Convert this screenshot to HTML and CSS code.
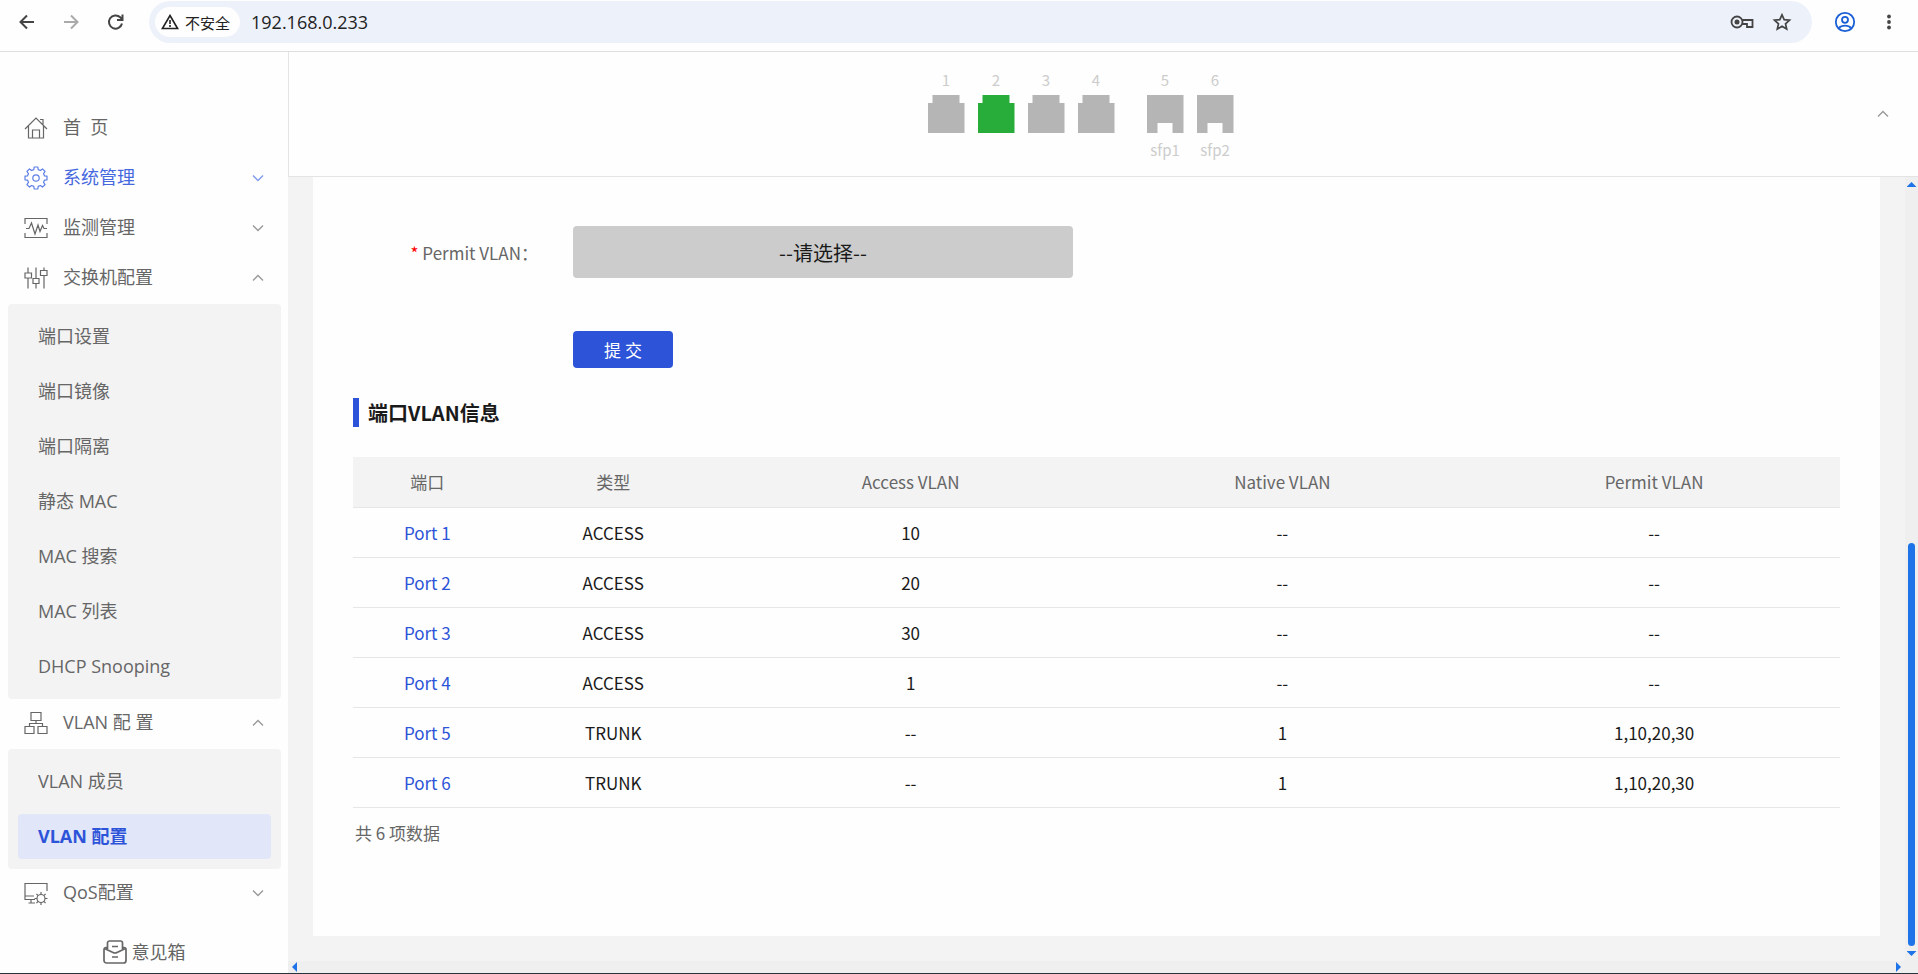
FILE: index.html
```html
<!DOCTYPE html>
<html lang="zh-CN">
<head>
    <meta charset="UTF-8" />
    <meta name="viewport" content="width=device-width, initial-scale=1" />
    <title>VLAN 配置</title>
    <link rel="stylesheet" href="styles.css">
</head>
<body>

<!-- browser bar -->
<div class="browser-bar">
    <button class="nav-btn" aria-label="后退">
        <svg width="20" height="20" viewBox="0 0 20 20"><path d="M17 10H4M10 3.500L3.500 10l6.500 6.500" /></svg>
    </button>
    <button class="nav-btn disabled" aria-label="前进" disabled>
        <svg width="20" height="20" viewBox="0 0 20 20"><path d="M3 10h13M10 3.500l6.500 6.500-6.500 6.500" /></svg>
    </button>
    <button class="nav-btn" aria-label="刷新">
        <svg width="20" height="20" viewBox="0 0 20 20"><path d="M17 11.500a6.600 6.600 0 1 1-1.800-6.200L17.500 7.600M17.500 2.500v5.500h-5.500" /></svg>
    </button>
    <div class="omnibox">
        <button class="security-chip">
            <svg width="18" height="16" viewBox="0 0 18 16"><path d="M9 1.500L16.600 14.500H1.400z" fill="none" stroke="#222" stroke-width="1.600" /><path d="M9 6v4M9 11v2" stroke="#222" stroke-width="1.600" /></svg>
            <span>不安全</span>
        </button>
        <input type="text" class="url-input" value="192.168.0.233" aria-label="地址栏" />
        <button class="omni-btn" aria-label="密码">
            <svg width="24" height="16" viewBox="0 0 24 16"><circle cx="7" cy="8" r="5.500" fill="none" stroke="#444" stroke-width="1.800" /><circle cx="7" cy="8" r="2.500" fill="#444" /><path d="M12 6h10.500v7h-5.500v-3h-5" fill="none" stroke="#444" stroke-width="1.800" /></svg>
        </button>
        <button class="omni-btn" aria-label="收藏">
            <svg width="20" height="20" viewBox="0 0 20 20"><path d="M10 2.800l2.200 4.900 5.300.500-4 3.600 1.200 5.300-4.700-2.800-4.700 2.800 1.200-5.300-4-3.600 5.300-.500z" fill="none" stroke="#444" stroke-width="1.700" /></svg>
        </button>
    </div>
    <button class="bar-btn profile" aria-label="用户">
        <svg width="22" height="22" viewBox="0 0 22 22" fill="none" stroke="#1a5fd6" stroke-width="1.800"><circle cx="11" cy="11" r="9.200" /><circle cx="11" cy="8.800" r="3" /><path d="M4.800 17.200c2.800-3.400 9.600-3.400 12.400 0" /></svg>
    </button>
    <button class="bar-btn" aria-label="更多">
        <svg width="22" height="22" viewBox="0 0 22 22" fill="#444"><circle cx="11" cy="5.500" r="1.900" /><circle cx="11" cy="11" r="1.900" /><circle cx="11" cy="16.500" r="1.900" /></svg>
    </button>
</div>

<div class="app">
    <aside class="sidebar">
        <nav class="menu">
            <a href="#" class="menu-item">
                <svg class="menu-icon" viewBox="0 0 24 24"><path d="M1 13L12 2l11 11M4.500 10v12h15V10M8.500 22v-8h7v8M16 3.500h3v5" /></svg>
                <span>首&nbsp;&nbsp;页</span>
            </a>
            <a href="#" class="menu-item highlight">
                <svg class="menu-icon" viewBox="0 0 24 24"><circle cx="12" cy="12" r="3.200" /><path stroke-linejoin="round" d="M9.800 3.600L10.200 1h3.600l.4 2.600L16.400 4.500l2.100-1.600 2.600 2.600-1.600 2.100.9 2.200 2.600.4v3.600l-2.600.4-.9 2.200 1.600 2.100-2.600 2.600-2.100-1.600-2.200.9-.4 2.600h-3.600l-.4-2.600-2.200-.9-2.100 1.600-2.600-2.600 1.600-2.100-.9-2.200L1 13.800v-3.600l2.600-.4.9-2.200L2.900 5.500l2.600-2.600 2.100 1.600z" /></svg>
                <span>系统管理</span>
                <svg class="chevron" viewBox="0 0 12 8"><path d="M1 1.500l5 5 5-5" /></svg>
            </a>
            <a href="#" class="menu-item">
                <svg class="menu-icon" viewBox="0 0 24 24"><path d="M1 8V2.500h22V8M1 17v4.500h22V17M2 12.500h3L7.500 7l3.500 11 3-9 2 6.500 2.500-6 1.500 3H23" /></svg>
                <span>监测管理</span>
                <svg class="chevron" viewBox="0 0 12 8"><path d="M1 1.500l5 5 5-5" /></svg>
            </a>
            <a href="#" class="menu-item">
                <svg class="menu-icon" viewBox="0 0 24 24"><path d="M4 1.500v5.500M4 12v10.500M12 1.500v11M12 18v4.500M20 1.500v3M20 9.500v13M1 7h6.500v5H1zM9 12.500h6v5H9zM16.500 4.500H23v5h-6.500z" /></svg>
                <span>交换机配置</span>
                <svg class="chevron" viewBox="0 0 12 8"><path d="M1 6.500l5-5 5 5" /></svg>
            </a>
            <div class="submenu">
                <a href="#">端口设置</a>
                <a href="#">端口镜像</a>
                <a href="#">端口隔离</a>
                <a href="#">静态 MAC</a>
                <a href="#">MAC 搜索</a>
                <a href="#">MAC 列表</a>
                <a href="#">DHCP Snooping</a>
            </div>
            <a href="#" class="menu-item">
                <svg class="menu-icon" viewBox="0 0 24 24"><path d="M7 1.500h10v8H7zM1 15.500h9v7H1zM14 15.500h9v7h-9zM12 9.500v3M5.500 15.500v-3h13v3" /></svg>
                <span>VLAN 配 置</span>
                <svg class="chevron" viewBox="0 0 12 8"><path d="M1 6.500l5-5 5 5" /></svg>
            </a>
            <div class="submenu">
                <a href="#">VLAN 成员</a>
                <a href="#" class="active">VLAN 配置</a>
            </div>
            <a href="#" class="menu-item">
                <svg class="menu-icon" viewBox="0 0 24 24"><path d="M23 10V2.500H1v16h10M1 15h9M7 18.500v3.500M4.500 22H11" /><circle cx="17" cy="17.500" r="4" /><path d="M17 11v2.500M17 21.500V24M10.500 17.500H13M21 17.500h2.500M12.400 12.900l1.800 1.800M19.800 20.300l1.800 1.800M12.400 22.100l1.800-1.800M19.800 14.700l1.800-1.800" /></svg>
                <span>QoS配置</span>
                <svg class="chevron" viewBox="0 0 12 8"><path d="M1 1.500l5 5 5-5" /></svg>
            </a>
        </nav>
        <a href="#" class="feedback">
            <svg width="24" height="24" viewBox="0 0 24 24" fill="none" stroke="#666" stroke-width="1.700"><path d="M4.500 9V3a2 2 0 0 1 2-2h11a2 2 0 0 1 2 2v6M4 7.500H3A2 2 0 0 0 1 9.500v11A2.500 2.500 0 0 0 3.500 23h17a2.500 2.500 0 0 0 2.500-2.500v-11a2 2 0 0 0-2-2h-1M1.500 8.500L10 12.500q2 1 4 0l8.500-4M9 6.500h6M9 17h6" /></svg>
            <span>意见箱</span>
        </a>
    </aside>

    <main class="main">
        <header class="port-panel">
            <div class="ports">
                <div class="port"><span>1</span><i class="jack"></i></div>
                <div class="port"><span>2</span><i class="jack up"></i></div>
                <div class="port"><span>3</span><i class="jack"></i></div>
                <div class="port"><span>4</span><i class="jack"></i></div>
                <div class="port sfp-first"><span>5</span><i class="sfp"></i><span>sfp1</span></div>
                <div class="port"><span>6</span><i class="sfp"></i><span>sfp2</span></div>
            </div>
            <button class="panel-toggle" aria-label="收起">
                <svg class="chevron" viewBox="0 0 12 8"><path d="M1 6.500l5-5 5 5" /></svg>
            </button>
        </header>

        <div class="scroll-area">
            <div class="content">
                <section class="card">
                    <form class="vlan-form">
                        <label for="permitVlan"><em>*</em> Permit VLAN：</label>
                        <select id="permitVlan" class="vlan-select">
                            <option>--请选择--</option>
                        </select>
                        <button type="button" class="submit-btn">提 交</button>
                    </form>

                    <h2 class="section-title">端口VLAN信息</h2>

                    <table class="vlan-table">
                        <thead>
                            <tr>
                                <th class="col-port">端口</th>
                                <th class="col-type">类型</th>
                                <th>Access VLAN</th>
                                <th>Native VLAN</th>
                                <th>Permit VLAN</th>
                            </tr>
                        </thead>
                        <tbody>
                            <tr><td><a href="#">Port 1</a></td><td>ACCESS</td><td>10</td><td>--</td><td>--</td></tr>
                            <tr><td><a href="#">Port 2</a></td><td>ACCESS</td><td>20</td><td>--</td><td>--</td></tr>
                            <tr><td><a href="#">Port 3</a></td><td>ACCESS</td><td>30</td><td>--</td><td>--</td></tr>
                            <tr><td><a href="#">Port 4</a></td><td>ACCESS</td><td>1</td><td>--</td><td>--</td></tr>
                            <tr><td><a href="#">Port 5</a></td><td>TRUNK</td><td>--</td><td>1</td><td>1,10,20,30</td></tr>
                            <tr><td><a href="#">Port 6</a></td><td>TRUNK</td><td>--</td><td>1</td><td>1,10,20,30</td></tr>
                        </tbody>
                    </table>
                    <p class="total">共 6 项数据</p>
                </section>
            </div>
            <div class="v-scroll">
                <i class="arrow-up"></i>
                <div class="v-thumb"></div>
                <i class="arrow-down"></i>
            </div>
            <div class="h-scroll">
                <i class="arrow-left"></i>
                <i class="arrow-right"></i>
            </div>
        </div>
    </main>
</div>

</body>
</html>
```

FILE: styles.css
```css
* {
  box-sizing: border-box;
}
body {
  margin: 0;
  height: 100vh;
  display: flex;
  flex-direction: column;
  background: #fefefe;
  color: #1a1a1a;
  font-family: 'Noto Sans CJK SC', sans-serif;
  font-size: 17px;
  border-bottom: 1px solid #26343d;
  overflow: hidden;
}
a {
  text-decoration: none;
}
button {
  border: none;
  background: none;
  padding: 0;
  font-family: inherit;
  cursor: pointer;
}
svg {
  display: block;
  flex-shrink: 0;
}

/* browser bar */
.browser-bar {
  display: flex;
  align-items: center;
  height: 52px;
  padding: 1px 18px 8px 17px;
  border-bottom: 1px solid #dfdfdf;
}
.nav-btn {
  margin-right: 24px;
}
.nav-btn svg {
  fill: none;
  stroke: #444;
  stroke-width: 2;
}
.nav-btn.disabled svg {
  stroke: #aaa;
}
.omnibox {
  flex: 1;
  display: flex;
  align-items: center;
  height: 42px;
  padding: 0 20px 0 6px;
  border-radius: 21px;
  background: #edf1fa;
}
.security-chip {
  display: flex;
  align-items: center;
  gap: 6px;
  height: 30px;
  padding: 0 10px 0 6px;
  border-radius: 15px;
  background: #fefefe;
  color: #222;
  font-size: 15px;
}
.url-input {
  flex: 1;
  margin-left: 11px;
  padding: 0;
  border: none;
  outline: none;
  background: transparent;
  color: #222;
  font-family: 'Open Sans', sans-serif;
  font-size: 18px;
}
.omni-btn {
  margin-left: 18px;
}
.bar-btn {
  margin-left: 22px;
}

.app {
  flex: 1;
  display: flex;
  min-height: 0;
}

/* sidebar */
.sidebar {
  width: 288px;
  flex-shrink: 0;
  display: flex;
  flex-direction: column;
  padding-top: 52px;
  font-family: 'Open Sans', 'Noto Sans CJK SC', sans-serif;
  font-size: 18px;
}
.menu-item {
  display: flex;
  align-items: center;
  height: 50px;
  padding: 0 24px 3px 24px;
  color: #666;
}
.menu-item span {
  flex: 1;
  margin-left: 15px;
  padding-bottom: 2px;
  line-height: 24px;
}
.menu-icon {
  width: 24px;
  height: 24px;
  fill: none;
  stroke: #666;
  stroke-width: 1.2;
}
.chevron {
  width: 12px;
  height: 8px;
  fill: none;
  stroke: #999;
  stroke-width: 1.4;
}
.menu-item.highlight {
  color: #4668de;
}
.highlight .menu-icon {
  stroke: #5d7fe6;
}
.highlight .chevron {
  stroke: #7f9aec;
}
.submenu {
  display: flex;
  flex-direction: column;
  gap: 10px;
  margin: 0 7px 0 8px;
  padding: 10px;
  border-radius: 4px;
  background: #f3f3f3;
}
.submenu a {
  height: 45px;
  padding-left: 20px;
  border-radius: 4px;
  color: #666;
  line-height: 44px;
}
.submenu a.active {
  background: #e1e7f8;
  color: #2d54d8;
  font-weight: 700;
}
.feedback {
  display: flex;
  align-items: center;
  justify-content: center;
  gap: 5px;
  margin-top: 19px;
  color: #666;
}
.feedback span {
  padding-bottom: 2px;
}

/* port panel */
.main {
  flex: 1;
  min-width: 0;
  display: flex;
  flex-direction: column;
}
.port-panel {
  display: flex;
  align-items: center;
  height: 125px;
  border-left: 1px solid #e4e4e4;
  border-bottom: 1px solid #e4e4e4;
}
.ports {
  flex: 1;
  display: flex;
  justify-content: center;
  gap: 13px;
  height: 90px;
}
.port {
  width: 37px;
  color: #ccc;
  font-size: 15px;
  line-height: 22px;
  text-align: center;
}
.port span {
  display: block;
}
.port i {
  display: block;
  height: 38px;
  margin: 4px 0 6px;
  background: #b5b5b5;
}
.sfp-first {
  margin-left: 19px;
}
.jack {
  clip-path: polygon(5px 0, 32px 0, 32px 8px, 100% 8px, 100% 100%, 0 100%, 0 8px, 5px 8px);
}
.port .up {
  background: #28ad3b;
}
.sfp {
  clip-path: polygon(0 0, 100% 0, 100% 100%, 26px 100%, 26px 28px, 11px 28px, 11px 100%, 0 100%);
}
.panel-toggle {
  width: 22px;
  margin-right: 24px;
}
.panel-toggle .chevron {
  margin: 0 auto;
}

/* content */
.scroll-area {
  flex: 1;
  min-height: 0;
  display: grid;
  grid-template-columns: 1fr 13px;
  grid-template-rows: 1fr 12px;
  background: #efefef;
}
.content {
  display: flex;
  padding: 0 25px 25px;
  background: #f3f3f3;
}
.card {
  flex: 1;
  padding: 49px 40px 0;
  background: #fefefe;
}
.vlan-form {
  display: grid;
  grid-template-columns: 185px 500px;
  column-gap: 35px;
  row-gap: 53px;
  align-items: center;
}
.vlan-form label {
  color: #666;
  text-align: right;
}
.vlan-form em {
  color: #f00;
  font-style: normal;
}
.vlan-select {
  appearance: none;
  height: 52px;
  border: none;
  border-radius: 4px;
  background: #ccc;
  color: #1a1a1a;
  font-family: inherit;
  font-size: 20px;
  text-align: center;
  text-align-last: center;
}
.submit-btn {
  grid-column: 2;
  width: 100px;
  height: 37px;
  border-radius: 4px;
  background: #2d54d8;
  color: #fff;
  font-size: 17px;
}
.section-title {
  margin: 30px 0;
  padding-left: 9px;
  border-left: 6px solid #2d54d8;
  font-size: 20px;
  font-weight: 700;
  line-height: 29px;
}
.vlan-table {
  width: 100%;
  table-layout: fixed;
  border-collapse: collapse;
  text-align: center;
}
.vlan-table th,
.vlan-table td {
  height: 50px;
  padding: 0;
  border-bottom: 1px solid #e6e6e6;
}
.vlan-table th {
  background: #f3f3f3;
  color: #666;
  font-weight: 400;
}
.vlan-table a {
  color: #2d54d8;
}
.col-port {
  width: 10%;
}
.col-type {
  width: 15%;
}
.total {
  margin: 12px 2px;
  color: #666;
}

/* scroll bars */
.v-scroll {
  display: flex;
  flex-direction: column;
  align-items: center;
  justify-content: space-between;
  padding: 5px 0 5px;
}
.v-thumb {
  width: 7px;
  height: 403px;
  margin: auto 0 5px;
  border-radius: 4px;
  background: #1f73e8;
}
.h-scroll {
  display: flex;
  align-items: center;
  justify-content: space-between;
  padding: 0 4px;
}
.arrow-up,
.arrow-down {
  width: 10px;
  height: 5px;
  background: #1f73e8;
  clip-path: polygon(50% 0, 100% 100%, 0 100%);
}
.arrow-down {
  clip-path: polygon(0 0, 100% 0, 50% 100%);
}
.arrow-left,
.arrow-right {
  width: 5px;
  height: 10px;
  background: #1f73e8;
  clip-path: polygon(0 50%, 100% 0, 100% 100%);
}
.arrow-right {
  clip-path: polygon(0 0, 100% 50%, 0 100%);
}
```
